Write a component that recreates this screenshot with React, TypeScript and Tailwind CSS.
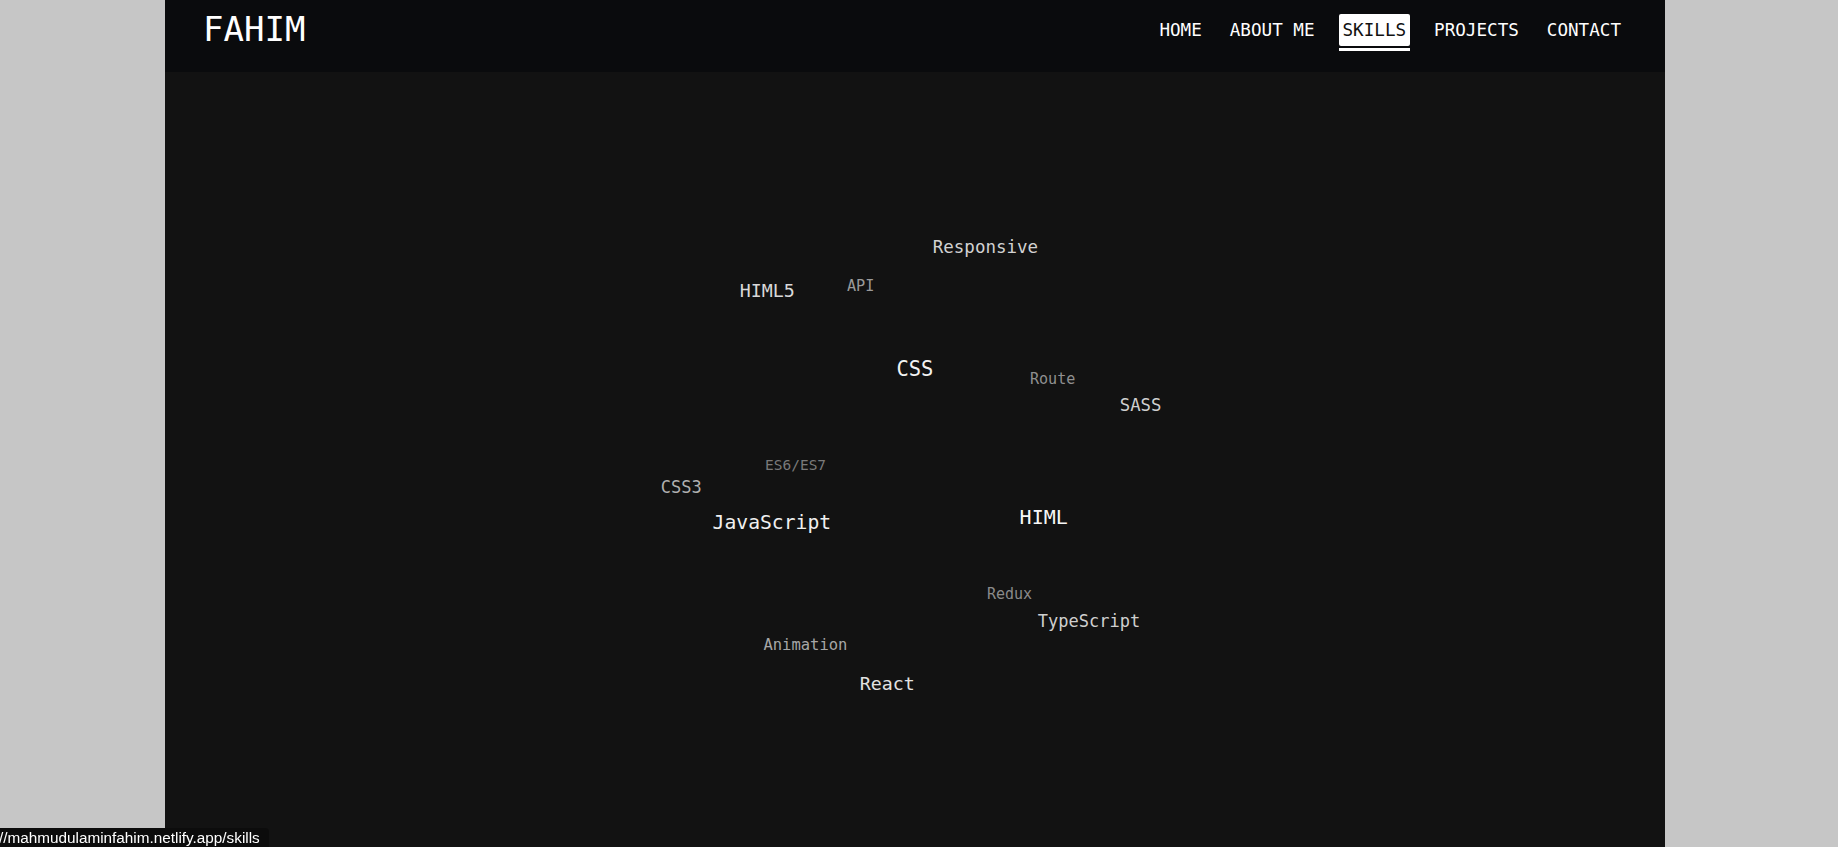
import React from 'react';

type Tag = {
  text: string;
  x: number; // glyph left, page coords
  cy: number; // cap centre, page coords
  size: number;
  color: string;
};

const LEFT = 165;
const HEADER_H = 72;

const tags: Tag[] = [
  { text: 'Responsive', x: 934, cy: 247, size: 17.5, color: '#d2d2d2' },
  { text: 'HIML5', x: 741, cy: 290.5, size: 18.3, color: '#d9d9d9' },
  { text: 'API', x: 848, cy: 286.5, size: 15.2, color: '#9a9a9a' },
  { text: 'CSS', x: 898, cy: 368.3, size: 20.4, color: '#f2f2f2' },
  { text: 'Route', x: 1031, cy: 379.3, size: 15.1, color: '#8f8f8f' },
  { text: 'SASS', x: 1121, cy: 405, size: 17.3, color: '#d0d0d0' },
  { text: 'ES6/ES7', x: 766, cy: 465, size: 14.5, color: '#7a7a7a' },
  { text: 'CSS3', x: 662, cy: 487.2, size: 17, color: '#b0b0b0' },
  { text: 'JavaScript', x: 714, cy: 522.3, size: 19.7, color: '#f0f0f0' },
  { text: 'HIML', x: 1021, cy: 517, size: 20, color: '#f7f7f7' },
  { text: 'Redux', x: 988, cy: 594.3, size: 15, color: '#8a8a8a' },
  { text: 'TypeScript', x: 1039, cy: 621.2, size: 17, color: '#cfcfcf' },
  { text: 'Animation', x: 764.5, cy: 645, size: 15.5, color: '#a6a6a6' },
  { text: 'React', x: 861, cy: 683.4, size: 18.3, color: '#e2e2e2' },
];

const links = ['HOME', 'ABOUT ME', 'SKILLS', 'PROJECTS', 'CONTACT'];

const mono = "font-['DejaVu_Sans_Mono','Liberation_Mono',monospace]";

export default function App() {
  return (
    <div className="min-h-screen bg-[#c6c6c6] pr-2">
      <div className={`relative mx-auto flex min-h-screen w-[1500px] flex-col bg-[#121212] ${mono}`}>
        {/* Top bar */}
        <header className="flex h-[72px] items-center justify-between bg-[#0a0b0d] pb-[14px] pl-[38px] pr-10">
          <span className="text-[34px] leading-none text-white">FAHIM</span>
          <nav className="flex items-center gap-5 pt-px">
            {links.map((l) => {
              const active = l === 'SKILLS';
              return (
                <a
                  key={l}
                  href="#"
                  className={`relative rounded-[2px] px-1 text-[17.6px] leading-[32px] whitespace-pre ${
                    active ? 'bg-white text-[#111]' : 'text-white'
                  }`}
                >
                  {l}
                  {active && <span className="absolute -bottom-[5px] left-0 right-0 h-[3px] bg-white" />}
                </a>
              );
            })}
          </nav>
        </header>

        {/* Skill tag sphere */}
        <section className="relative flex-1">
          {tags.map((t) => (
            <span
              key={t.text}
              className="absolute leading-none whitespace-pre"
              style={{
                left: t.x - LEFT - t.size * 0.07,
                top: t.cy - HEADER_H - t.size * 0.48,
                fontSize: t.size,
                color: t.color,
              }}
            >
              {t.text}
            </span>
          ))}
        </section>
      </div>

      {/* browser link preview */}
      <div className="fixed bottom-0 left-0 flex h-[19px] w-[269px] items-center overflow-hidden rounded-tr-[4px] bg-[#0c0c0c] font-['Liberation_Sans',Arial,sans-serif] text-[15.3px] leading-none text-white">
        <span className="-ml-px whitespace-pre">//mahmudulaminfahim.netlify.app/skills</span>
      </div>
    </div>
  );
}
